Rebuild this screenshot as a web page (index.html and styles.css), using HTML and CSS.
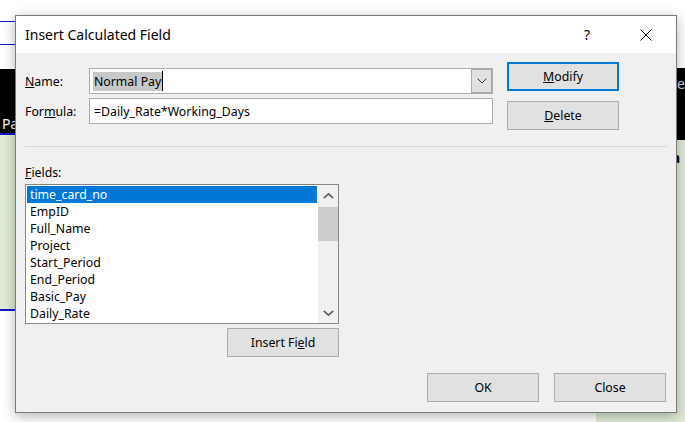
FILE: index.html
```html
<!DOCTYPE html>
<html lang="en">
<head>
  <meta charset="UTF-8" />
  <title>Insert Calculated Field</title>
  <link rel="stylesheet" href="styles.css">
</head>
<body>
  <div class="sheet">
    <div class="sheet-left">
      <div class="band band-top"></div>
      <div class="band band-mid"></div>
      <div class="band band-low"></div>
      <div class="band band-head"><span>Pa</span></div>
      <div class="band band-green"></div>
      <div class="band band-rest"></div>
    </div>
    <div class="sheet-right">
      <div class="band band-blank"></div>
      <div class="band band-head-r"><span>de</span></div>
      <div class="band band-green-r">
        <span class="bold">ia</span>
        <span>L</span>
      </div>
    </div>
  </div>

  <div class="dialog">
    <div class="titlebar">
      <span class="title">Insert Calculated Field</span>
      <span class="help">?</span>
      <span class="close">
        <svg width="12" height="12" viewBox="0 0 12 12">
          <path d="M0.5 0.5 L11.5 11.5 M11.5 0.5 L0.5 11.5" stroke="#000" stroke-width="1" fill="none"/>
        </svg>
      </span>
    </div>

    <div class="body">
      <div class="top">
        <div class="form">
          <div class="form-row">
            <span class="label"><u>N</u>ame:</span>
            <div class="combo">
              <div class="combo-text"><span class="selected">Normal Pay</span><span class="caret"></span></div>
              <div class="combo-button">
                <svg width="10" height="6" viewBox="0 0 10 6">
                  <path d="M0.5 0.5 L5 5 L9.5 0.5" stroke="#333" stroke-width="1" fill="none"/>
                </svg>
              </div>
            </div>
          </div>
          <div class="form-row">
            <span class="label">For<u>m</u>ula:</span>
            <div class="textbox">=Daily_Rate*Working_Days</div>
          </div>
        </div>
        <div class="side-buttons">
          <button class="btn btn-default"><u>M</u>odify</button>
          <button class="btn"><u>D</u>elete</button>
        </div>
      </div>

      <div class="separator"></div>

      <div class="fields">
        <div class="fields-label"><u>F</u>ields:</div>
        <div class="list">
          <ul class="list-items">
            <li class="active">time_card_no</li>
            <li>EmpID</li>
            <li>Full_Name</li>
            <li>Project</li>
            <li>Start_Period</li>
            <li>End_Period</li>
            <li>Basic_Pay</li>
            <li>Daily_Rate</li>
          </ul>
          <div class="scrollbar">
            <div class="arrow">
              <svg width="11" height="6" viewBox="0 0 11 6">
                <path d="M0.8 5.2 L5.5 0.8 L10.2 5.2" stroke="#606060" stroke-width="1.6" fill="none"/>
              </svg>
            </div>
            <div class="track"><div class="thumb"></div></div>
            <div class="arrow">
              <svg width="11" height="6" viewBox="0 0 11 6">
                <path d="M0.8 0.8 L5.5 5.2 L10.2 0.8" stroke="#606060" stroke-width="1.6" fill="none"/>
              </svg>
            </div>
          </div>
        </div>
        <div class="insert-row">
          <button class="btn">Insert Fi<u>e</u>ld</button>
        </div>
      </div>

      <div class="footer">
        <button class="btn">OK</button>
        <button class="btn">Close</button>
      </div>
    </div>
  </div>
</body>
</html>
```

FILE: styles.css
```css
body {
  margin: 0;
  padding: 0;
  font-family: "Noto Sans", sans-serif;
  font-size: 12.3px;
  color: #000;
  background-color: #fff;
  width: 685px;
  height: 422px;
  overflow: hidden;
  position: relative;
}

/* spreadsheet behind the dialog */
.sheet {
  display: flex;
  height: 422px;
}

.sheet-left {
  width: 607px;
  display: flex;
  flex-direction: column;
}

.sheet-right {
  flex: 1;
  display: flex;
  flex-direction: column;
}

.band-top {
  height: 21px;
  border-bottom: 1px solid #1414c8;
}

.band-mid {
  height: 22px;
  border-bottom: 1px solid #1414c8;
}

.band-low {
  height: 24px;
}

.band-head {
  height: 64px;
  background-color: #000;
  color: #fff;
  font-size: 14px;
  display: flex;
  align-items: flex-end;
  padding-left: 2px;
  border-bottom: 2px solid #1414c8;
}

.band-green {
  height: 174px;
  background-color: #dfebd6;
  border-bottom: 2px solid #1414c8;
}

.band-rest {
  flex: 1;
}

.band-blank {
  height: 68px;
}

.band-head-r {
  height: 72px;
  background-color: #000;
  color: #c9dcf2;
  font-size: 14px;
  padding: 6px 0 0 72px;
  box-sizing: border-box;
  white-space: nowrap;
  overflow: hidden;
}

.band-green-r {
  flex: 1;
  background-color: #dfebd6;
  display: flex;
  flex-direction: column;
  padding: 6px 0 0 71px;
  font-size: 14px;
  line-height: 24px;
  white-space: nowrap;
  overflow: hidden;
}

.bold {
  font-weight: bold;
}

/* dialog window */
.dialog {
  position: absolute;
  left: 15px;
  top: 15px;
  width: 662px;
  height: 398px;
  box-sizing: border-box;
  border: 1px solid #7a7a7a;
  background-color: #f0f0f0;
  box-shadow: 0 3px 12px rgba(0, 0, 0, 0.3);
  display: flex;
  flex-direction: column;
}

.titlebar {
  height: 37px;
  background-color: #fff;
  display: flex;
  align-items: center;
}

.title {
  flex: 1;
  padding-left: 9px;
  font-size: 14px;
}

.help {
  width: 58px;
  text-align: center;
  font-size: 14px;
}

.close {
  width: 60px;
  display: flex;
  justify-content: center;
}

.body {
  flex: 1;
  padding: 0 9px 10px 9px;
  display: flex;
  flex-direction: column;
}

.top {
  display: flex;
  align-items: flex-start;
}

.form {
  padding-top: 15px;
  display: flex;
  flex-direction: column;
  gap: 4px;
}

.form-row {
  display: flex;
  align-items: center;
  height: 26px;
}

.label {
  width: 64px;
}

.combo {
  width: 404px;
  height: 26px;
  box-sizing: border-box;
  border: 1px solid #adadad;
  background-color: #fff;
  display: flex;
}

.combo-text {
  flex: 1;
  display: flex;
  align-items: center;
  padding-left: 3px;
}

.selected {
  background-color: #c8c8c8;
  padding: 0 1px;
  line-height: 19px;
}

.caret {
  width: 1px;
  height: 20px;
  background-color: #000;
}

.combo-button {
  width: 21px;
  box-sizing: border-box;
  border: 1px solid #a8a8a8;
  background-color: #e1e1e1;
  display: flex;
  align-items: center;
  justify-content: center;
}

.textbox {
  width: 404px;
  height: 26px;
  box-sizing: border-box;
  border: 1px solid #adadad;
  background-color: #fff;
  padding-left: 4px;
  display: flex;
  align-items: center;
}

.side-buttons {
  margin-left: 14px;
  padding-top: 9px;
  display: flex;
  flex-direction: column;
  gap: 10px;
}

.btn {
  width: 112px;
  height: 29px;
  box-sizing: border-box;
  border: 1px solid #adadad;
  background-color: #e1e1e1;
  font-family: "Noto Sans", sans-serif;
  font-size: 12.3px;
  color: #000;
  padding: 0;
}

.btn-default {
  border: 2px solid #0078d7;
}

.separator {
  margin-top: 16px;
  height: 1px;
  background-color: #d9d9d9;
}

.fields {
  width: 314px;
  display: flex;
  flex-direction: column;
}

.fields-label {
  margin-top: 18px;
  line-height: 16px;
}

.list {
  margin-top: 3px;
  height: 140px;
  box-sizing: border-box;
  border: 1px solid #828790;
  background-color: #fff;
  display: flex;
}

.list-items {
  flex: 1;
  list-style: none;
  margin: 0;
  padding: 1px;
}

.list-items li {
  height: 17px;
  line-height: 17px;
  padding-left: 3px;
}

.list-items li.active {
  background-color: #0078d7;
  color: #fff;
}

.scrollbar {
  width: 20px;
  background-color: #f0f0f0;
  display: flex;
  flex-direction: column;
}

.arrow {
  height: 21px;
  display: flex;
  align-items: center;
  justify-content: center;
}

.track {
  flex: 1;
}

.thumb {
  margin-top: 1px;
  height: 34px;
  background-color: #cdcdcd;
}

.insert-row {
  display: flex;
  justify-content: flex-end;
  margin-top: 4px;
}

.footer {
  margin-top: 16px;
  display: flex;
  justify-content: flex-end;
  gap: 15px;
  padding-right: 1px;
}
```
